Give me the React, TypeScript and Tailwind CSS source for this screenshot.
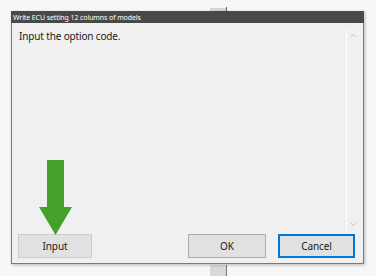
import React from 'react';

function Chevron({ up }: { up?: boolean }) {
  return (
    <svg width="7" height="5" viewBox="0 0 7 5" className="text-[#c4c4c4]">
      <path d={up ? 'M1 4 L3.5 1.5 L6 4' : 'M1 1 L3.5 3.5 L6 1'} fill="none" stroke="currentColor" strokeWidth="1" />
    </svg>
  );
}

function DownArrow() {
  return (
    <svg width="33" height="75" viewBox="0 0 33 75" className="text-[#43a02a]">
      <path d="M8 0 H25 V47 H33 L16.5 75 L0 47 H8 Z" fill="currentColor" />
    </svg>
  );
}

export default function App() {
  const font = { fontFamily: '"Noto Sans", "Open Sans", sans-serif' };
  return (
    <div className="relative h-[276px] w-[376px] overflow-hidden bg-[#f7f7f7] pl-[11px] pt-[11px]" style={font}>
      {/* bits of the window behind */}
      <div className="absolute left-[210px] top-[8px] h-[3px] w-[16px] bg-[#d6d6d6]" />
      <div className="absolute left-[226px] top-[7px] h-[4px] w-px bg-[#666]" />
      <div className="absolute left-[210px] top-[265px] h-[11px] w-[16px] bg-[#d9d9d9]" />
      <div className="absolute left-[226px] top-[265px] h-[11px] w-px bg-[#777]" />

      <div className="relative flex h-[253px] w-[353px] flex-col border border-[#7a7a7a] border-t-0 bg-[#f0f0f0] shadow-[1px_1px_3px_rgba(0,0,0,0.25)]">
        <div className="-mx-px flex h-[12px] items-center bg-[#494949] px-[2px] text-[7px] leading-none tracking-[-0.1px] text-white">
          Write ECU setting 12 columns of models
        </div>

        <div className="flex flex-1 pb-[3px] pr-[6px] pt-[6px]">
          <div className="flex-1 pl-[7px] text-[10px] leading-[14px] tracking-[-0.15px] text-[#1a1a1a]">Input the option code.</div>
          <div className="flex w-[11px] flex-col items-center justify-between border-l border-white py-[4px] pl-[2px]">
            <Chevron up />
            <Chevron />
          </div>
        </div>

        <div className="flex h-[24px] items-center pl-[6px] pr-[8px] text-[10px] tracking-[-0.1px] text-[#1a1a1a]">
          <button className="flex h-[24px] w-[74px] items-center justify-center border border-[#cdcdcd] bg-[#e1e1e1]">Input</button>
          <div className="flex-1" />
          <button className="flex h-[24px] w-[78px] items-center justify-center border border-[#adadad] bg-[#e1e1e1]">OK</button>
          <button className="ml-[12px] flex h-[24px] w-[77px] items-center justify-center border-2 border-[#0078d7] bg-[#e1e1e1]">Cancel</button>
        </div>
        <div className="h-[5px]" />

        <div className="absolute left-[27px] top-[149px]">
          <DownArrow />
        </div>
      </div>
    </div>
  );
}
